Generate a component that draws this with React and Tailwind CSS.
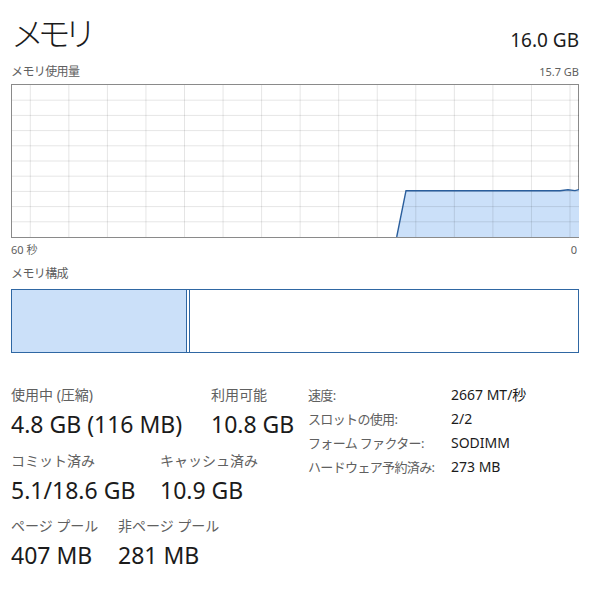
const FONT = { fontFamily: '"Noto Sans", "Noto Sans CJK JP", sans-serif' }

const W = 567
const H = 152

function UsageChart() {
  const vLines = Array.from({ length: 15 }, (_, i) => 18.3 + i * 38.55)
  const hLines = Array.from({ length: 9 }, (_, i) => (i + 1) * 15.2)
  const pts = [
    [384.7, 152],
    [394, 105.7],
    [548, 105.7],
    [556, 104.8],
    [563, 105.6],
    [567, 104.6],
  ]
  const line = pts.map(([x, y]) => `${x},${y}`).join(' ')
  const area = `${line} 567,152`

  return (
    <svg width={W} height={H} className="block">
      <polygon points={area} fill="#cbe0f9" />
      {vLines.map((x) => (
        <line key={`v${x}`} x1={x} x2={x} y1={0} y2={H} stroke="rgba(0,0,0,0.1)" strokeWidth="1" />
      ))}
      {hLines.map((y) => (
        <line key={`h${y}`} x1={0} x2={W} y1={y} y2={y} stroke="rgba(0,0,0,0.1)" strokeWidth="1" />
      ))}
      <polyline points={line} fill="none" stroke="#2a5e9c" strokeWidth="1.4" />
    </svg>
  )
}

function Stat({ label, value, className = '' }) {
  return (
    <div className={className}>
      <div className="text-[14px] leading-[20px] text-[#606060]">{label}</div>
      <div className="mt-[4px] text-[23px] leading-[30px] text-[#1b1b1b]">{value}</div>
    </div>
  )
}

const specs = [
  ['速度:', '2667 MT/秒'],
  ['スロットの使用:', '2/2'],
  ['フォーム ファクター:', 'SODIMM'],
  ['ハードウェア予約済み:', '273 MB'],
]

export default function App() {
  return (
    <div style={FONT} className="w-[610px] h-[594px] bg-white pl-[11px] pr-[31px] overflow-hidden">
      <div className="flex justify-between items-end pt-[16px]">
        <h1 className="text-[33px] leading-[36px] font-light text-[#1b1b1b] tracking-[-0.2em]">メモリ</h1>
        <div className="text-[19px] leading-[24px] text-[#1b1b1b]">16.0 GB</div>
      </div>

      <div className="mt-[12px] flex justify-between items-center leading-[16px] text-[#606060]">
        <span className="text-[12px] tracking-[-0.05em]">メモリ使用量</span>
        <span className="text-[11px]">15.7 GB</span>
      </div>

      <div className="mt-[4px] h-[154px] border border-[#8a8a8a]">
        <UsageChart />
      </div>

      <div className="mt-[4px] flex justify-between text-[11px] leading-[16px] text-[#606060]">
        <span>60 秒</span>
        <span className="pr-[2px]">0</span>
      </div>

      <div className="mt-[8px] text-[12px] leading-[16px] text-[#606060] tracking-[-0.05em]">メモリ構成</div>

      <div className="mt-[7px] h-[64px] flex border border-[#2f67a3]">
        <div className="w-[175px] bg-[#cbe0f9] border-r border-[#2f67a3]" />
        <div className="w-[3px] border-r border-[#2f67a3]" />
        <div className="flex-1" />
      </div>

      <div className="flex">
        <div className="w-[297px]">
          <div className="mt-[32px] flex">
            <Stat className="w-[200px]" label="使用中 (圧縮)" value="4.8 GB (116 MB)" />
            <Stat label="利用可能" value="10.8 GB" />
          </div>
          <div className="mt-[12px] flex">
            <Stat className="w-[149px]" label="コミット済み" value="5.1/18.6 GB" />
            <Stat label="キャッシュ済み" value="10.9 GB" />
          </div>
          <div className="mt-[11px] flex">
            <Stat className="w-[107px]" label="ページ プール" value="407 MB" />
            <Stat label="非ページ プール" value="281 MB" />
          </div>
        </div>

        <div className="mt-[30px] leading-[24px]">
          {specs.map(([k, v]) => (
            <div key={k} className="flex">
              <span className="w-[143px] text-[13px] text-[#606060] tracking-[-0.05em]">{k}</span>
              <span className="text-[14px] text-[#1b1b1b]">{v}</span>
            </div>
          ))}
        </div>
      </div>
    </div>
  )
}
